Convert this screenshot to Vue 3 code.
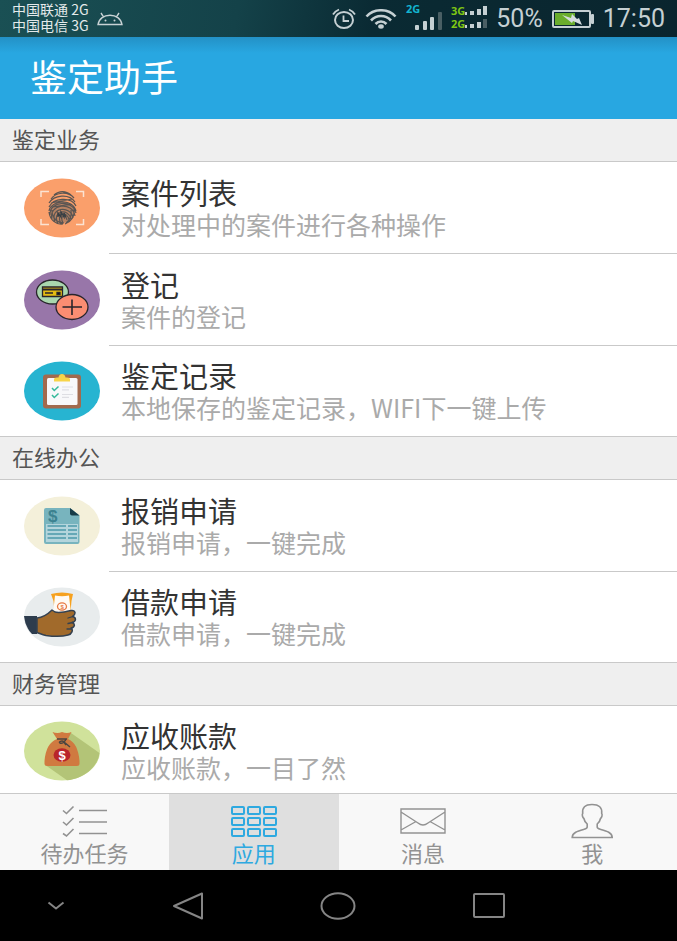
<template>
  <div class="phone">
    <header class="status-bar">
      <div class="carriers">
        <span>中国联通 2G</span>
        <span>中国电信 3G</span>
      </div>
      <svg class="android-icon" width="26" height="14" viewBox="0 0 26 14" fill="none" stroke="#c9d3d5" stroke-width="1.4">
        <path d="M1 12.500C2 6.500 7 3.200 13 3.200s11 3.300 12 9.300zM6.500 4.800L4 1M19.500 4.800L22 1" />
        <circle cx="8.500" cy="8.500" r="1" fill="#c9d3d5" stroke="none" />
        <circle cx="17.500" cy="8.500" r="1" fill="#c9d3d5" stroke="none" />
      </svg>

      <div class="status-right">
        <svg width="24" height="22" viewBox="0 0 24 22" fill="none" stroke="#c5d0d3">
          <ellipse cx="12" cy="12" rx="9" ry="8" stroke-width="2" />
          <path d="M11.500 7.500V13H17" stroke-width="1.800" />
          <path d="M1 6.500C2.500 4 4.500 2.500 7 1.500M23 6.500C21.500 4 19.500 2.500 17 1.500" stroke-width="1.800" />
        </svg>
        <svg width="32" height="20" viewBox="0 0 32 20" fill="none" stroke="#c5d0d3" stroke-width="2.600">
          <path d="M1.500 7.500C9-.8 23-.8 30.500 7.500M6 11.500c5.500-6 14.500-6 20 0M10.500 15c3.200-3.300 7.800-3.300 11 0" />
          <ellipse cx="16" cy="17.500" rx="2.800" ry="2.200" fill="#c5d0d3" stroke="none" />
        </svg>
        <div class="signal">
          <span class="net net-blue">2G</span>
          <svg width="36" height="26" viewBox="0 0 36 26" fill="#c5d0d3">
            <rect x="9" y="19" width="4" height="5" rx="1" />
            <rect x="17" y="15" width="4" height="9" rx="1" />
            <rect x="24" y="11" width="4" height="13" rx="1" />
            <rect x="32" y="6" width="4" height="18" rx="1" fill="#4a5f64" />
          </svg>
        </div>
        <div class="dual">
          <div v-for="net in ['3G', '2G']" :key="net" class="dual-row">
            <span class="net net-green">{{ net }}</span>
            <svg width="22" height="11" viewBox="0 0 22 11" fill="#c5d0d3">
              <rect x="0" y="6" width="2" height="3" />
              <rect x="5" y="5" width="4" height="4" />
              <rect x="12" y="3" width="4" height="6" />
              <rect x="18" y="0" width="4" height="9" :fill="net === '2G' ? '#4a5f64' : '#c5d0d3'" />
            </svg>
          </div>
        </div>
        <span class="reading">50%</span>
        <svg width="42" height="18" viewBox="0 0 42 18">
          <rect x="1" y="1" width="37" height="16" rx="1" fill="none" stroke="#c5d0d3" stroke-width="2" />
          <rect x="3" y="3" width="20" height="12" fill="#6aad2c" />
          <rect x="39" y="4" width="3" height="10" rx="1" fill="#c5d0d3" />
          <path d="M10 5l9 3 1-4 5 5 2-1 3 7-9-4-1 2z" fill="#d5dcde" />
        </svg>
        <time class="reading">17:50</time>
      </div>
    </header>

    <div class="app-bar">
      <h1>鉴定助手</h1>
    </div>

    <main class="content">
      <section v-for="group in groups" :key="group.title">
        <h2 class="group-title">{{ group.title }}</h2>
        <ul class="list">
          <li v-for="item in group.items" :key="item.icon">
            <a class="row" :href="'#' + item.icon">
              <svg class="row-icon" width="76" height="60" viewBox="0 0 76 60">
                <g v-if="item.icon === 'cases'" fill="none">
                  <ellipse cx="38" cy="30" rx="38" ry="29.500" fill="#fa9f6b" />
                  <path d="M17 19v-5.500h8M52 13.500h7.500V19M17 41v5.500h8M52 46.500h7.500V41" stroke="#fbe3d2" stroke-width="1.500" />
                  <ellipse cx="38" cy="34" rx="12" ry="11" fill="#65605c" fill-opacity=".45" />
                  <g stroke="#5a5552" stroke-width="1.200">
                    <path d="M30 17c5-4.500 12-4.500 17 0M27 21c5-7 17-8 23-1M25 25c5-8 20-10 26-1M25 29c4-9 22-11 27-1M25 33c2-11 24-13 27 0M26 37c-1-14 23-16 26-2M28 41c-4-15 21-18 23-3M31 44c-6-15 16-17 18-4M34 46c-7-14 11-16 13-5M37 46c-6-12 7-13 8-4M39 45c-4-8 3-9 4-3M27 25l21-4M29 29l18-3M25 34c1 8 7 13 14 12M28 32c0 8 5 13 12 13M50 31c1 7-3 13-9 15M47 32c1 6-1 10-5 13" />
                  </g>
                  <path d="M34 39v-4l3 4v-5l3 5v-4l2 4" stroke="#393f44" stroke-width="1.400" />
                </g>

                <g v-else-if="item.icon === 'register'" stroke="#28252c" stroke-width="1.300">
                  <ellipse cx="38" cy="30" rx="38" ry="29.500" fill="#9876a9" stroke="none" />
                  <ellipse cx="28.500" cy="22" rx="16" ry="12" fill="#a9d7ae" />
                  <path d="M18.500 17h20v9.500h-20z" fill="#e5bd13" />
                  <path d="M18.500 19.500h20" stroke-width="2" />
                  <path d="M21 23h8M33 22.500h3v2h-3z" />
                  <ellipse cx="48" cy="37" rx="16" ry="12.500" fill="#fb8d72" />
                  <path d="M38.500 37h19.500M48 29.500v15.500" stroke-width="1.600" />
                </g>

                <g v-else-if="item.icon === 'records'">
                  <ellipse cx="38" cy="30" rx="38" ry="29.500" fill="#27b4d1" />
                  <rect x="19" y="13.500" width="38" height="34" rx="3" fill="#a26a4e" />
                  <rect x="23" y="17" width="30.500" height="27" rx="1.500" fill="#f8f8fa" />
                  <path d="M30 20.500v-2q0-2 3-2h1.500q.5-3.500 3.500-3.500t3.500 3.500H43q3 0 3 2v2z" fill="#f7d448" />
                  <path d="M28 27l2.300 2.500 4.200-4M28 34l2.300 2.500 4.200-4" fill="none" stroke="#35b99b" stroke-width="1.500" />
                  <path d="M38 26h11M38 28.800h7M38 33.500h11M38 36.300h7" stroke="#dedee3" stroke-width="1.200" />
                </g>

                <g v-else-if="item.icon === 'expense'">
                  <ellipse cx="38" cy="30" rx="38" ry="29.500" fill="#f4f0da" />
                  <path d="M22 12h24l9.500 7.500V46q0 2-2 2H22q-2 0-2-2V14q0-2 2-2z" fill="#78b4be" />
                  <path d="M46 12l9.500 7.500H48q-2 0-2-2z" fill="#173c47" />
                  <text x="24" y="25.500" class="expense-sign">$</text>
                  <path d="M22 28h32v18H22z" fill="#b4d5dc" />
                  <path d="M23.500 30H42M44 30h9M23.500 34H42M44 34h9M23.500 38H42M44 38h9M23.500 42H42M44 42h9" stroke="#66a8b6" stroke-width="2" />
                </g>

                <g v-else-if="item.icon === 'loan'">
                  <ellipse cx="38" cy="30" rx="38" ry="29.500" fill="#e8eced" />
                  <path d="M27 7q11-3 22 0l-1.500 7-1 11H30.500l-1-11z" fill="#f6a11e" />
                  <path d="M31 8.500q7 1.500 14 0l2 18H29z" fill="#fffaf3" />
                  <ellipse cx="38" cy="19.500" rx="4.500" ry="3.700" fill="none" stroke="#e77942" stroke-width="1.300" />
                  <text x="36.500" y="22" class="loan-sign">$</text>
                  <path d="M0 29h13v18H8Q1 40 0 29z" fill="#2d3c4d" />
                  <path d="M13 31c6-.5 11-4 15-8l3 2c4 1 10 0 16-1.500 5-.8 5 4 1.500 6 4 1 4 5-.5 6 3.500 1 3 5-1 5.500 2.500 2 1 6-3 7-6 1.800-15 1.500-22 .5-4-.7-6-2-9-3z" fill="#a16a2b" stroke="#344150" stroke-width="1.500" stroke-linejoin="round" />
                  <path d="M44 31l5-1.500M44 36.500l5-1M43 42h5" fill="none" stroke="#344150" stroke-width="1.300" stroke-linecap="round" />
                </g>

                <g v-else>
                  <ellipse cx="38" cy="30" rx="38" ry="29.500" fill="#d0e29b" />
                  <path d="M47 12l28.500 20C74 46 59 58 43 59.300L22 44.500z" fill="#b3c477" />
                  <path d="M28.500 11q5 2 9.500 0 5 2 9.500 0L44 18q10 4 11.500 22v3q0 2-2.500 2H23q-2.500 0-2.500-2v-3Q22 22 33 18z" fill="#d07a40" />
                  <path d="M33 18h10M42 18c-1 3-4 5-6 4s2-3 4-1l6 5M40 21l2 3" fill="none" stroke="#4b4540" stroke-width="1.500" />
                  <ellipse cx="38" cy="34" rx="8.500" ry="6.700" fill="#b9252a" />
                  <text x="34.500" y="38.500" class="bag-sign">$</text>
                </g>
              </svg>
              <span class="row-body">
                <span class="row-title">{{ item.title }}</span>
                <span class="row-desc">{{ item.desc }}</span>
              </span>
            </a>
          </li>
        </ul>
      </section>
    </main>

    <nav class="tabs">
      <button
        v-for="tab in tabs"
        :key="tab.id"
        type="button"
        class="tab"
        :class="{ active: tab.id === activeTab }"
        @click="activeTab = tab.id"
      >
        <svg width="48" height="38" viewBox="0 0 48 38" fill="none" stroke="currentColor">
          <g v-if="tab.id === 'todo'" stroke-width="1.600">
            <path d="M18 12.500h28M18 24h28M18 35.500h28" />
            <path d="M2 12.500l3.500 3L12.500 8.500M2 24l3.500 3 7-7M2 35.500l3.500 2.500 7-7" />
          </g>
          <g v-else-if="tab.id === 'apps'" stroke-width="2">
            <template v-for="y in [9, 20, 31]" :key="y">
              <rect v-for="x in [2, 18, 34]" :key="x" :x="x" :y="y" width="12" height="7" rx="1" />
            </template>
          </g>
          <g v-else-if="tab.id === 'messages'" stroke-width="1.400">
            <path d="M2 11h44v24H2zM2 14l17 11q5 4 10 0l17-11M2 32l15-8.500M46 32l-15-8.500" />
          </g>
          <path v-else stroke-width="1.600" d="M24 6.500c-7 0-10 3-9.300 9-.9 1-.2 4 1.200 5 .5 3 1.600 4 3.300 5.500v3c0 1-1 1.800-3 2.300-6 1.600-12 3-12 8.200h40c0-5.200-6-6.600-12-8.200-2-.5-3-1.300-3-2.300v-3c1.700-1.500 2.800-2.500 3.300-5.500 1.400-1 2.100-4 1.200-5 .7-6-2.700-9-9.700-9z" />
        </svg>
        <span>{{ tab.label }}</span>
      </button>
    </nav>

    <footer class="system-nav">
      <button type="button" aria-label="收起">
        <svg width="18" height="10" viewBox="0 0 18 10"><path d="M1.500 1.500L9 7.500l7.500-6" /></svg>
      </button>
      <button type="button" aria-label="返回">
        <svg width="32" height="28" viewBox="0 0 32 28"><path d="M2 14L30 1.500v25z" /></svg>
      </button>
      <button type="button" aria-label="主屏幕">
        <svg width="36" height="28" viewBox="0 0 36 28"><ellipse cx="18" cy="14" rx="16.500" ry="12.700" /></svg>
      </button>
      <button type="button" aria-label="最近任务">
        <svg width="32" height="26" viewBox="0 0 32 26"><rect x="1" y="1" width="30" height="23" rx="1" /></svg>
      </button>
    </footer>
  </div>
</template>

<script setup>
import { ref } from 'vue'

const activeTab = ref('apps')

const groups = [
  {
    title: '鉴定业务',
    items: [
      { icon: 'cases', title: '案件列表', desc: '对处理中的案件进行各种操作' },
      { icon: 'register', title: '登记', desc: '案件的登记' },
      { icon: 'records', title: '鉴定记录', desc: '本地保存的鉴定记录，WIFI下一键上传' }
    ]
  },
  {
    title: '在线办公',
    items: [
      { icon: 'expense', title: '报销申请', desc: '报销申请，一键完成' },
      { icon: 'loan', title: '借款申请', desc: '借款申请，一键完成' }
    ]
  },
  {
    title: '财务管理',
    items: [
      { icon: 'receivable', title: '应收账款', desc: '应收账款，一目了然' }
    ]
  }
]

const tabs = [
  { id: 'todo', label: '待办任务' },
  { id: 'apps', label: '应用' },
  { id: 'messages', label: '消息' },
  { id: 'me', label: '我' }
]
</script>

<style>
body {
  background: #fff;
}
</style>

<style scoped>
.phone {
  display: flex;
  flex-direction: column;
  height: 100vh;
  font-family: "Noto Sans CJK SC", "Liberation Sans", sans-serif;
  color: #333;
}

.status-bar {
  display: flex;
  align-items: center;
  flex-shrink: 0;
  height: 37px;
  padding: 0 12px;
  box-sizing: border-box;
  background: linear-gradient(100deg, #1a5054 0%, #144249 35%, #0a2a33 55%, #0a252e 100%);
  color: #c5d0d3;
}

.carriers {
  display: flex;
  flex-direction: column;
  padding-bottom: 3px;
  font-size: 14px;
  line-height: 16px;
  color: #e4eaeb;
}

.android-icon {
  margin-left: 8px;
}

.status-right {
  display: flex;
  align-items: center;
  gap: 9px;
  margin-left: auto;
  font-family: Roboto, sans-serif;
}

.signal {
  position: relative;
  display: flex;
}

.net {
  font-family: "Open Sans", sans-serif;
  font-size: 11px;
  line-height: 12px;
  font-weight: 700;
}

.net-blue {
  position: absolute;
  left: 0;
  top: -3px;
  color: #13b5d1;
}

.dual {
  padding-bottom: 4px;
}

.net-green {
  color: #7ec614;
}

.dual-row {
  display: flex;
  align-items: flex-end;
  height: 13px;
}

.reading {
  font-size: 25px;
  line-height: 28px;
}

.app-bar {
  display: flex;
  align-items: center;
  flex-shrink: 0;
  height: 82px;
  padding: 0 30px 4px;
  box-sizing: border-box;
  background: linear-gradient(#2391c6 0, #28a7e1 16px);
}

.app-bar h1 {
  margin: 0;
  font-size: 37px;
  line-height: 48px;
  font-weight: 400;
  color: #fff;
}

.content {
  flex: 1;
  min-height: 0;
  overflow-y: auto;
  scrollbar-width: none;
  background: #fff;
}

.group-title {
  display: flex;
  align-items: center;
  height: 44px;
  margin: 0;
  padding: 0 12px 4px;
  box-sizing: border-box;
  border-top: 1px solid #c9c9c9;
  border-bottom: 1px solid #c9c9c9;
  background: #efefef;
  font-size: 22px;
  font-weight: 400;
  color: #555;
}

section:first-child .group-title {
  height: 43px;
  border-top: none;
}

.list {
  margin: 0;
  padding: 0;
  list-style: none;
}

.row {
  display: flex;
  align-items: center;
  padding-left: 24px;
  color: inherit;
  text-decoration: none;
}

.row-icon {
  flex-shrink: 0;
}

.row-body {
  display: flex;
  flex: 1;
  flex-direction: column;
  justify-content: center;
  height: 92px;
  margin-left: 9px;
  padding-left: 12px;
  box-sizing: border-box;
  border-bottom: 1px solid #c9c9c9;
  white-space: nowrap;
}

li:last-child .row-body {
  height: 90px;
  border-bottom: none;
}

.row-title {
  font-size: 29px;
  line-height: 32px;
}

.row-desc {
  font-size: 25px;
  line-height: 32px;
  color: #aaa;
}

.expense-sign,
.loan-sign,
.bag-sign {
  font-family: "Liberation Sans", sans-serif;
  font-weight: 700;
}

.expense-sign {
  font-size: 17px;
  fill: #3c8290;
}

.loan-sign {
  font-size: 6px;
  fill: #e77942;
}

.bag-sign {
  font-size: 13px;
  fill: #fff;
}

.tabs {
  display: grid;
  grid-template-columns: repeat(4, 1fr);
  flex-shrink: 0;
  height: 77px;
  box-sizing: border-box;
  border-top: 1px solid #c9c9c9;
  background: #f8f8f8;
}

.tab {
  display: flex;
  flex-direction: column;
  align-items: center;
  gap: 2px;
  padding: 4px 0 0;
  border: none;
  background: none;
  font-family: inherit;
  font-size: 22px;
  line-height: 28px;
  color: #929292;
  cursor: pointer;
}

.tab svg {
  flex-shrink: 0;
  overflow: visible;
}

.tab.active {
  background: #dfdfdf;
  color: #2ea9e0;
}

.system-nav {
  display: grid;
  grid-template-columns: 3fr 4fr 4fr 4fr 3fr;
  flex-shrink: 0;
  height: 71px;
  background: #000;
}

.system-nav button {
  display: flex;
  align-items: center;
  justify-content: center;
  padding: 0;
  border: none;
  background: none;
  cursor: pointer;
}

.system-nav svg {
  fill: none;
  stroke: #858585;
  stroke-width: 2;
  stroke-linejoin: round;
}
</style>
